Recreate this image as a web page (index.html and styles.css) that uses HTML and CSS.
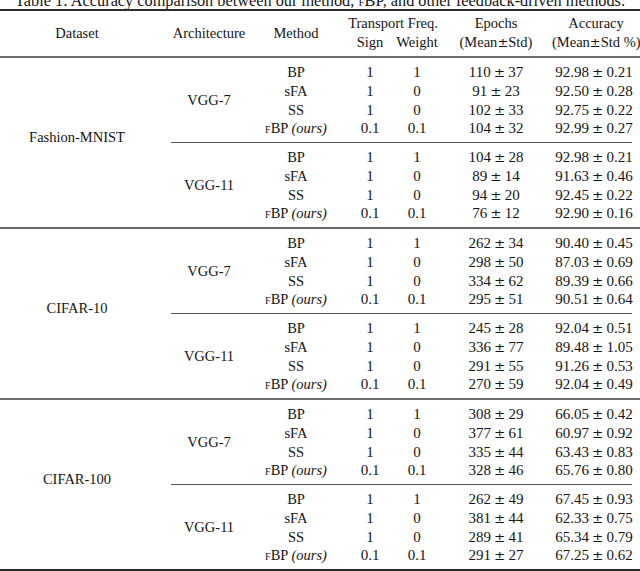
FILE: index.html
```html
<!DOCTYPE html>
<html>
<head>
<meta charset="utf-8">
<title>Table 1</title>
<link rel="stylesheet" href="styles.css">
</head>
<body>
<div class="page">
  <div class="caption"><span class="caption-text">Table 1: Accuracy comparison between our method, <span class="sc">f</span>BP, and other feedback-driven methods.</span></div>
  <div class="toprule"></div>
  <div class="head">
    <div>Dataset</div>
    <div>Architecture</div>
    <div>Method</div>
    <div class="h-tf">
      <div>Transport Freq.</div>
      <div class="h-tf-sub"><span>Sign</span><span>Weight</span></div>
    </div>
    <div>Epochs<br>(Mean<span class="pm-h">±</span>Std)</div>
    <div>Accuracy<br>(Mean<span class="pm-h">±</span>Std %)</div>
  </div>
  <div class="midrule"></div>

  <section class="block">
    <div class="ds">Fashion-MNIST</div>
    <div class="archs">
      <div class="arch">
        <div class="arch-name">VGG-7</div>
        <div class="rows">
          <div class="row"><span class="m">BP</span><span class="s">1</span><span class="w">1</span><span class="n">110<span class="pm">±</span>37</span><span class="n">92.98<span class="pm">±</span>0.21</span></div>
          <div class="row"><span class="m">sFA</span><span class="s">1</span><span class="w">0</span><span class="n">91<span class="pm">±</span>23</span><span class="n">92.50<span class="pm">±</span>0.28</span></div>
          <div class="row"><span class="m">SS</span><span class="s">1</span><span class="w">0</span><span class="n">102<span class="pm">±</span>33</span><span class="n">92.75<span class="pm">±</span>0.22</span></div>
          <div class="row"><span class="m"><span class="sc">f</span>BP <i>(ours)</i></span><span class="s">0.1</span><span class="w">0.1</span><span class="n">104<span class="pm">±</span>32</span><span class="n">92.99<span class="pm">±</span>0.27</span></div>
        </div>
      </div>
      <div class="cmid"></div>
      <div class="arch">
        <div class="arch-name">VGG-11</div>
        <div class="rows">
          <div class="row"><span class="m">BP</span><span class="s">1</span><span class="w">1</span><span class="n">104<span class="pm">±</span>28</span><span class="n">92.98<span class="pm">±</span>0.21</span></div>
          <div class="row"><span class="m">sFA</span><span class="s">1</span><span class="w">0</span><span class="n">89<span class="pm">±</span>14</span><span class="n">91.63<span class="pm">±</span>0.46</span></div>
          <div class="row"><span class="m">SS</span><span class="s">1</span><span class="w">0</span><span class="n">94<span class="pm">±</span>20</span><span class="n">92.45<span class="pm">±</span>0.22</span></div>
          <div class="row"><span class="m"><span class="sc">f</span>BP <i>(ours)</i></span><span class="s">0.1</span><span class="w">0.1</span><span class="n">76<span class="pm">±</span>12</span><span class="n">92.90<span class="pm">±</span>0.16</span></div>
        </div>
      </div>
    </div>
  </section>
  <div class="midrule"></div>

  <section class="block">
    <div class="ds">CIFAR-10</div>
    <div class="archs">
      <div class="arch">
        <div class="arch-name">VGG-7</div>
        <div class="rows">
          <div class="row"><span class="m">BP</span><span class="s">1</span><span class="w">1</span><span class="n">262<span class="pm">±</span>34</span><span class="n">90.40<span class="pm">±</span>0.45</span></div>
          <div class="row"><span class="m">sFA</span><span class="s">1</span><span class="w">0</span><span class="n">298<span class="pm">±</span>50</span><span class="n">87.03<span class="pm">±</span>0.69</span></div>
          <div class="row"><span class="m">SS</span><span class="s">1</span><span class="w">0</span><span class="n">334<span class="pm">±</span>62</span><span class="n">89.39<span class="pm">±</span>0.66</span></div>
          <div class="row"><span class="m"><span class="sc">f</span>BP <i>(ours)</i></span><span class="s">0.1</span><span class="w">0.1</span><span class="n">295<span class="pm">±</span>51</span><span class="n">90.51<span class="pm">±</span>0.64</span></div>
        </div>
      </div>
      <div class="cmid"></div>
      <div class="arch">
        <div class="arch-name">VGG-11</div>
        <div class="rows">
          <div class="row"><span class="m">BP</span><span class="s">1</span><span class="w">1</span><span class="n">245<span class="pm">±</span>28</span><span class="n">92.04<span class="pm">±</span>0.51</span></div>
          <div class="row"><span class="m">sFA</span><span class="s">1</span><span class="w">0</span><span class="n">336<span class="pm">±</span>77</span><span class="n">89.48<span class="pm">±</span>1.05</span></div>
          <div class="row"><span class="m">SS</span><span class="s">1</span><span class="w">0</span><span class="n">291<span class="pm">±</span>55</span><span class="n">91.26<span class="pm">±</span>0.53</span></div>
          <div class="row"><span class="m"><span class="sc">f</span>BP <i>(ours)</i></span><span class="s">0.1</span><span class="w">0.1</span><span class="n">270<span class="pm">±</span>59</span><span class="n">92.04<span class="pm">±</span>0.49</span></div>
        </div>
      </div>
    </div>
  </section>
  <div class="midrule"></div>

  <section class="block">
    <div class="ds">CIFAR-100</div>
    <div class="archs">
      <div class="arch">
        <div class="arch-name">VGG-7</div>
        <div class="rows">
          <div class="row"><span class="m">BP</span><span class="s">1</span><span class="w">1</span><span class="n">308<span class="pm">±</span>29</span><span class="n">66.05<span class="pm">±</span>0.42</span></div>
          <div class="row"><span class="m">sFA</span><span class="s">1</span><span class="w">0</span><span class="n">377<span class="pm">±</span>61</span><span class="n">60.97<span class="pm">±</span>0.92</span></div>
          <div class="row"><span class="m">SS</span><span class="s">1</span><span class="w">0</span><span class="n">335<span class="pm">±</span>44</span><span class="n">63.43<span class="pm">±</span>0.83</span></div>
          <div class="row"><span class="m"><span class="sc">f</span>BP <i>(ours)</i></span><span class="s">0.1</span><span class="w">0.1</span><span class="n">328<span class="pm">±</span>46</span><span class="n">65.76<span class="pm">±</span>0.80</span></div>
        </div>
      </div>
      <div class="cmid"></div>
      <div class="arch">
        <div class="arch-name">VGG-11</div>
        <div class="rows">
          <div class="row"><span class="m">BP</span><span class="s">1</span><span class="w">1</span><span class="n">262<span class="pm">±</span>49</span><span class="n">67.45<span class="pm">±</span>0.93</span></div>
          <div class="row"><span class="m">sFA</span><span class="s">1</span><span class="w">0</span><span class="n">381<span class="pm">±</span>44</span><span class="n">62.33<span class="pm">±</span>0.75</span></div>
          <div class="row"><span class="m">SS</span><span class="s">1</span><span class="w">0</span><span class="n">289<span class="pm">±</span>41</span><span class="n">65.34<span class="pm">±</span>0.79</span></div>
          <div class="row"><span class="m"><span class="sc">f</span>BP <i>(ours)</i></span><span class="s">0.1</span><span class="w">0.1</span><span class="n">291<span class="pm">±</span>27</span><span class="n">67.25<span class="pm">±</span>0.62</span></div>
        </div>
      </div>
    </div>
  </section>
  <div class="bottomrule"></div>
</div>
</body>
</html>
```

FILE: styles.css
```css
html, body {
  margin: 0;
  padding: 0;
  background: #ffffff;
}

body {
  color: #151515;
  font-family: "Liberation Serif", "Times New Roman", serif;
  font-size: 14.5px;
}

.page {
  width: 640px;
}

.caption {
  height: 9px;
  overflow: hidden;
  text-align: center;
  font-size: 16.3px;
  line-height: 16px;
  white-space: nowrap;
}

.caption-text {
  display: block;
  margin-top: -7px;
}

.sc {
  font-variant: small-caps;
}

.toprule,
.bottomrule {
  height: 2px;
  background: #2b2b2b;
}

.midrule {
  height: 2px;
  background: #6c6c6c;
}

.head {
  display: grid;
  grid-template-columns: 154px 110px 64px 112px 112px 88px;
  align-items: center;
  text-align: center;
  line-height: 19px;
  padding: 3px 0 4px;
  white-space: nowrap;
}

.h-tf {
  padding-left: 18px;
}

.h-tf-sub {
  display: grid;
  grid-template-columns: 48px 46px;
}

.pm-h {
  font-family: "DejaVu Serif", serif;
  font-size: 13px;
}

.block {
  display: grid;
  grid-template-columns: 154px 1fr;
}

.ds {
  align-self: center;
  text-align: center;
  padding-bottom: 10px;
}

.archs {
  display: flex;
  flex-direction: column;
  padding: 5px 0 4px;
}

.arch {
  display: grid;
  grid-template-columns: 110px 1fr;
}

.arch-name {
  align-self: center;
  text-align: center;
}

.row {
  display: grid;
  grid-template-columns: 64px 66px 46px 112px 84px;
  height: 18.75px;
  line-height: 18.75px;
  align-items: center;
  text-align: center;
  white-space: nowrap;
}

.s {
  padding-left: 18px;
  font-size: 15px;
}

.w {
  font-size: 15px;
}

.n {
  font-size: 15px;
}

.pm {
  font-family: "DejaVu Serif", serif;
  font-size: 13.5px;
  margin: 0 3px;
}

.cmid {
  height: 1px;
  background: #555555;
  margin: 4px 8px 5px 17px;
}
```
